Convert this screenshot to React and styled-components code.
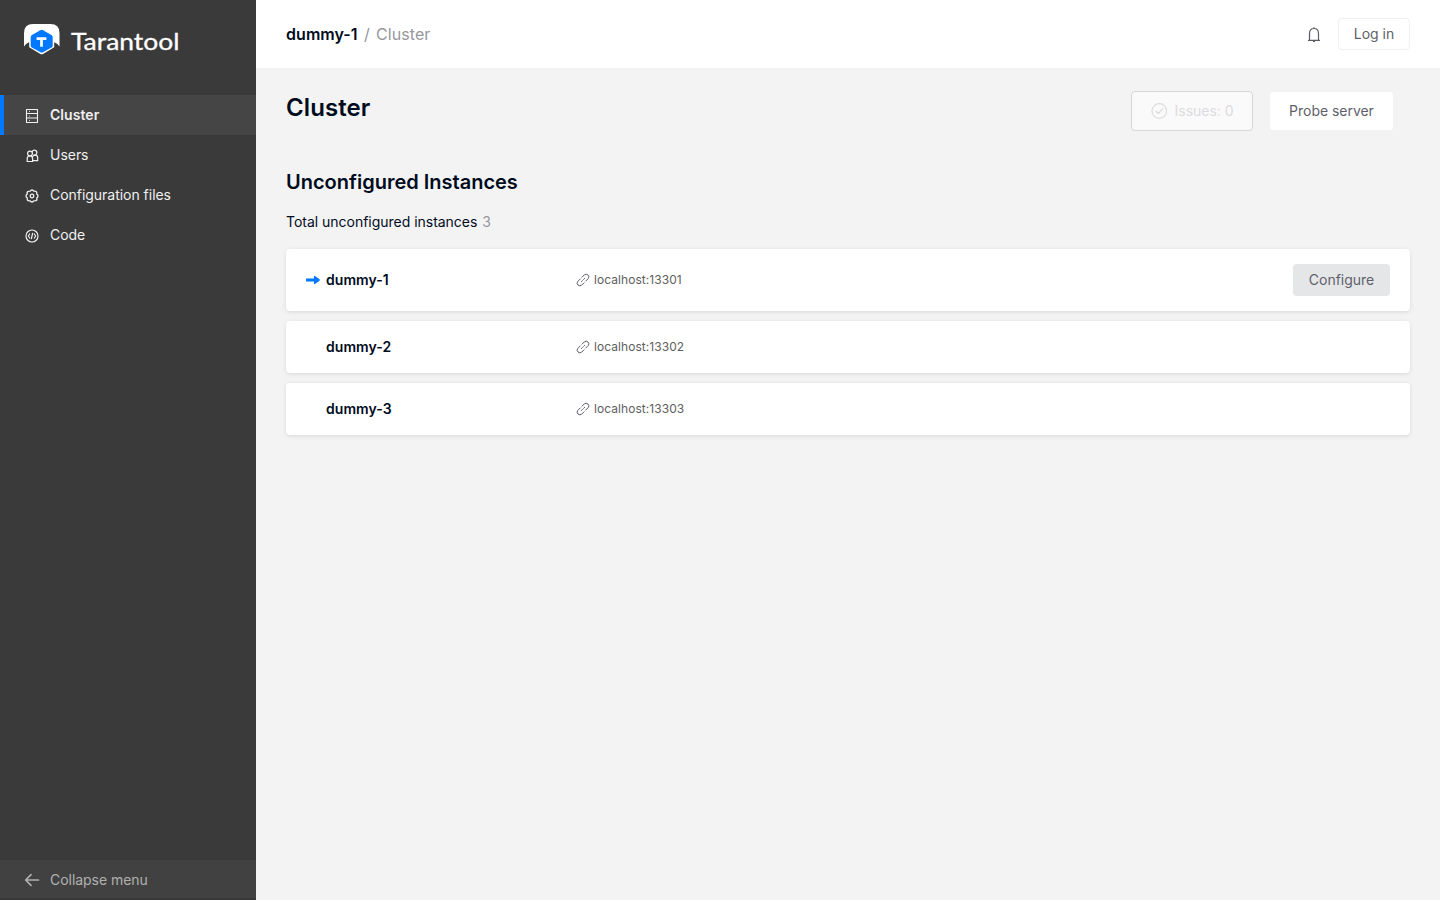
import React from "react";
import styled, { createGlobalStyle } from "styled-components";

const Global = createGlobalStyle`
  * { box-sizing: border-box; }
  body { margin: 0; background: #f3f3f3; font-family: Inter, "Liberation Sans", sans-serif; font-size: 14px; line-height: 22px; color: #000c1d; }
  h1, h2, p, ul { margin: 0; padding: 0; }
  svg { display: block; flex: none; }
`;
const Shell = styled.div`display: flex; height: 100vh; overflow: hidden;`;
const Sidebar = styled.aside`
  width: 256px; flex: none; display: flex; flex-direction: column; background: #3a3a3a;
`;
const Brand = styled.div`height: 95px; padding: 24px 24px 0;`;
const Nav = styled.nav`flex: 1; display: flex; flex-direction: column;`;
const NavItem = styled.a`
  display: flex; align-items: center; gap: 10px; height: 40px; padding: 0 24px 0 20px;
  border-left: 4px solid ${(p) => (p.$active ? "#0079ff" : "transparent")};
  background: ${(p) => (p.$active ? "#454545" : "transparent")};
  color: #f0f0f0; font-weight: ${(p) => (p.$active ? 600 : 400)};
  letter-spacing: ${(p) => (p.$active ? "0.05px" : "-0.03px")};
  svg { margin-top: 2px; }
`;
const Collapse = styled.button`
  display: flex; align-items: center; gap: 10px; height: 40px; padding: 2px 24px 0;
  border: 0; border-bottom: 2px solid #383838; background: #414141; color: #b0b0b0; font: inherit;
  letter-spacing: -0.04px;
`;
const Main = styled.main`flex: 1; min-width: 0; display: flex; flex-direction: column;`;
const Header = styled.header`
  height: 68px; flex: none; padding: 0 30px; display: flex; align-items: center; background: #fff;
`;
const Crumbs = styled.div`
  flex: 1; display: flex; gap: 6.3px; font-size: 16px; line-height: 24px; color: #97979e; letter-spacing: 0.05px;
`;
const CrumbRoot = styled.span`font-weight: 600; color: #000c1d;`;
const Button = styled.button`
  display: flex; align-items: center; justify-content: center; gap: 8px;
  width: ${(p) => p.$w}px; height: ${(p) => p.$h}px; padding: 0;
  border: 1px solid ${(p) => p.$line || "transparent"}; border-radius: ${(p) => p.$r || 4}px;
  background: ${(p) => p.$bg || "#fff"};
  color: ${(p) => p.$fg || "#5f5f6b"}; font: inherit; letter-spacing: -0.03px; white-space: nowrap;
`;
const HeaderActions = styled.div`display: flex; align-items: center; gap: 16px;`;
const Content = styled.div`padding: 23px 30px;`;
const TitleBar = styled.div`display: flex; align-items: flex-start; justify-content: space-between; height: 78px;`;
const Title = styled.h1`font-size: 24px; line-height: 34px; font-weight: 600; letter-spacing: 0.1px;`;
const TitleActions = styled.div`display: flex; align-items: center; gap: 17px; padding-right: 17px;`;
const SubTitle = styled.h2`font-size: 20px; line-height: 26px; font-weight: 600;`;
const Total = styled.p`margin-top: 16px; letter-spacing: -0.02px; span { color: #97979e; margin-left: 1px; }`;
const List = styled.div`margin-top: 16px; display: flex; flex-direction: column; gap: 10px;`;
const Row = styled.div`
  display: flex; align-items: center; height: ${(p) => (p.$self ? 62 : 52)}px; padding: 0 20px;
  background: #fff; border-radius: 4px; box-shadow: 0 1px 4px rgba(0, 0, 0, 0.11);
`;
const Marker = styled.div`width: 20px;`;
const Name = styled.div`width: 250px; font-weight: 600; letter-spacing: 0.05px;`;
const Uri = styled.div`
  flex: 1; display: flex; align-items: center; gap: 4px; font-size: 12px; line-height: 20px; color: #606060;
  letter-spacing: 0.06px;
`;

const Logo = () => (
  <svg width="160" height="34" viewBox="0 0 160 34">
    <path d="M0 22.500V9Q0 0 9 0H26.500Q35.500 0 35.500 9V22.500Q34 20 31 18.500H4.500Q1.500 20 0 22.500Z" fill="#fff" />
    <path d="M17.700 4L30.200 11V23.300L19 29.900Q17.700 30.700 16.400 29.900L5.200 23.300V11Z" fill="#fff" />
    <path d="M16.400 6.200Q17.700 5.500 19 6.200L27.500 11.100Q28.700 11.900 28.700 13.400V21.500Q28.700 22.900 27.500 23.600L19 28.300Q17.700 29 16.400 28.300L7.900 23.600Q6.700 22.900 6.700 21.500V13.400Q6.700 11.900 7.900 11.100Z" fill="#0079ff" />
    <path d="M12.600 14.600H22.400M17.500 14.600V22.800" stroke="#fff" strokeWidth="2.700" fill="none" />
    <text x="47" y="26" fill="#fff" fontFamily="Lato, sans-serif" fontSize="23.500" fontWeight="400" stroke="#fff" strokeWidth=".3" textLength="108.500" lengthAdjust="spacingAndGlyphs">Tarantool</text>
  </svg>
);
const Icon = ({ size = 16, box = 16, children, w = 1.2, color = "currentColor" }) => (
  <svg width={size} height={size} viewBox={`0 0 ${box} ${box}`} fill="none" stroke={color} strokeWidth={w} strokeLinecap="round" strokeLinejoin="round">{children}</svg>
);
const ClusterIcon = () => (
  <Icon w="1.100">
    <path d="M2.500 1.500H13.500V14.500H2.500Z" />
    <path d="M2.500 5.500H13.500M2.500 10H13.500" />
    <path d="M5.500 3.500h.01M5.500 8h.01M5.500 12.300h.01" />
  </Icon>
);
const UsersIcon = () => (
  <Icon w="1.200">
    <circle cx="6" cy="5.500" r="2.400" />
    <path d="M8.200 3.800A2.400 2.400 0 1 1 9.900 7" />
    <path d="M3.200 13.500V10.800Q3.200 8 5.900 8T8.600 10.800V13.500Z" />
    <path d="M8.600 8.900Q9.300 7.200 11 7.200Q13.700 7.200 13.700 10V12.700H8.900" />
  </Icon>
);
const GearIcon = () => (
  <Icon w="1.300">
    <path d="M8 2Q9.300 2 9.800 3.200Q12.200 2.600 12.700 4.200L12.800 6.200Q14 6.700 14 8T12.800 9.800Q13.400 12.200 11.800 12.700L9.800 12.800Q9.300 14 8 14T6.200 12.800Q3.800 13.400 3.300 11.800L3.200 9.800Q2 9.300 2 8T3.200 6.200Q2.600 3.800 4.200 3.300L6.200 3.200Q6.700 2 8 2Z" />
    <circle cx="8" cy="8" r="1.800" />
  </Icon>
);
const CodeIcon = () => (
  <Icon w="1.200">
    <circle cx="8" cy="8" r="6" />
    <path d="M5.700 6L4.300 8L5.700 10M10.300 6L11.700 8L10.300 10M8.600 5.400L7.400 10.600" />
  </Icon>
);
const BackIcon = () => <Icon w="1.700"><path d="M14.500 8H1.700M7 2.700L1.700 8L7 13.300" /></Icon>;
const BellIcon = () => (
  <Icon w="1.200" color="#5c5c69">
    <path d="M3.500 14V7.700Q3.500 2.500 8 2.500T12.500 7.700V14M2.500 14.400H13.500M8 1.500V2.200M7.500 15.400H8.500" />
  </Icon>
);
const CheckIcon = () => (
  <Icon w="1.200"><circle cx="8.300" cy="8" r="7.300" /><path d="M5 8.300L7.300 10.500L11.800 5.700" /></Icon>
);
const LinkIcon = () => (
  <Icon size={14} box={14} w="1" color="#5c5c69">
    <path d="M6 4.200L8.400 1.800Q10.200.400 12 2T12.200 5.600L9.800 8" />
    <path d="M8 9.800L5.600 12.200Q3.800 13.600 2 12T1.800 8.400L4.200 6" />
    <path d="M5.400 8.600L6.400 7.600M7.600 6.400L8.600 5.400" />
  </Icon>
);
const ArrowIcon = () => (
  <svg width="14" height="10" viewBox="0 0 14 10"><path d="M0 3.500H8V1.200Q8 .4 9 .9L13.500 4.300Q14.200 5 13.500 5.700L9 9.100Q8 9.600 8 8.800V6.500H0Z" fill="#0079ff" /></svg>
);

const nav = [
  ["Cluster", ClusterIcon],
  ["Users", UsersIcon],
  ["Configuration files", GearIcon],
  ["Code", CodeIcon],
];
const instances = [
  { name: "dummy-1", uri: "localhost:13301", self: true },
  { name: "dummy-2", uri: "localhost:13302" },
  { name: "dummy-3", uri: "localhost:13303" },
];

export default function App() {
  return (
    <Shell>
      <Global />
      <Sidebar>
        <Brand><Logo /></Brand>
        <Nav>
          {nav.map(([label, Glyph], i) => (
            <NavItem key={label} $active={i === 0}><Glyph />{label}</NavItem>
          ))}
        </Nav>
        <Collapse><BackIcon />Collapse menu</Collapse>
      </Sidebar>
      <Main>
        <Header>
          <Crumbs><CrumbRoot>dummy-1</CrumbRoot><span>/</span><span>Cluster</span></Crumbs>
          <HeaderActions>
            <BellIcon />
            <Button $w={72} $h={32} $line="#f0f0f1">Log in</Button>
          </HeaderActions>
        </Header>
        <Content>
          <TitleBar>
            <Title>Cluster</Title>
            <TitleActions>
              <Button $w={122} $h={40} $line="#d5d6da" $bg="#fafafa" $fg="#dcdcdf"><CheckIcon />Issues: 0</Button>
              <Button $w={123} $h={38} $r={3}>Probe server</Button>
            </TitleActions>
          </TitleBar>
          <SubTitle>Unconfigured Instances</SubTitle>
          <Total>Total unconfigured instances <span>3</span></Total>
          <List>
            {instances.map((it) => (
              <Row key={it.name} $self={it.self}>
                <Marker>{it.self && <ArrowIcon />}</Marker>
                <Name>{it.name}</Name>
                <Uri><LinkIcon />{it.uri}</Uri>
                {it.self && <Button $w={97} $h={32} $bg="#e5e6e8">Configure</Button>}
              </Row>
            ))}
          </List>
        </Content>
      </Main>
    </Shell>
  );
}
